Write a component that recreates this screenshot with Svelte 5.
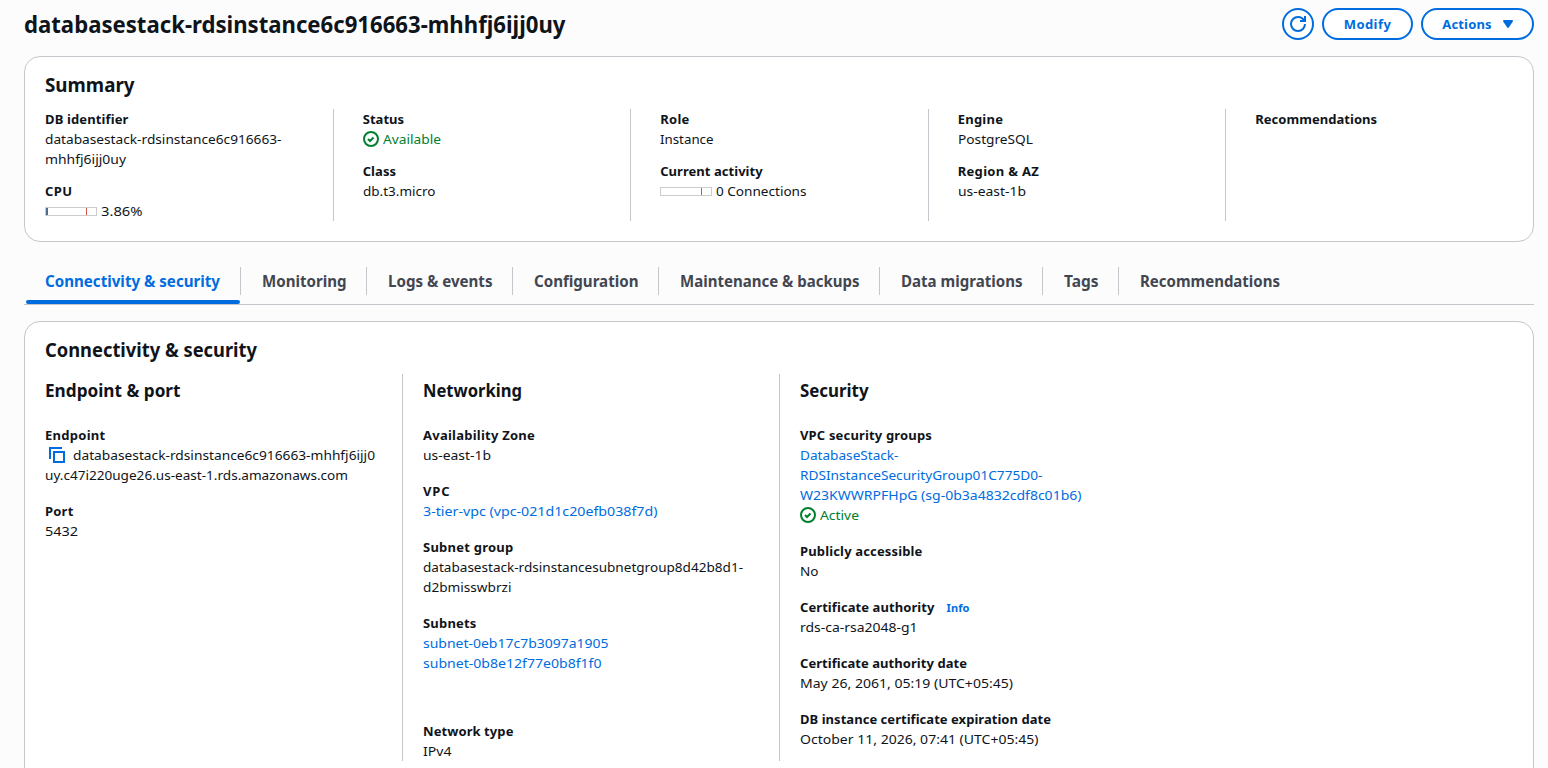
<script>
  const summary = [
    [
      { label: ['DB identifier', 83.5], lines: [['databasestack-rdsinstance6c916663-', 236.5], ['mhhfj6ijj0uy', 81]] },
      { label: ['CPU', 27.5], meter: 2, lines: [['3.86%', 41.5]] }
    ],
    [
      { label: ['Status', 41.5], ok: true, lines: [['Available', 58]] },
      { label: ['Class', 33.5], lines: [['db.t3.micro', 72.5]] }
    ],
    [
      { label: ['Role', 29.5], lines: [['Instance', 53.5]] },
      { label: ['Current activity', 102.5], meter: 0, lines: [['0 Connections', 90.5]] }
    ],
    [
      { label: ['Engine', 45.5], lines: [['PostgreSQL', 75]] },
      { label: ['Region & AZ', 81.5], lines: [['us-east-1b', 68]] }
    ],
    [{ label: ['Recommendations', 122], lines: [] }]
  ];

  const tabs = [
    ['Connectivity & security', 175],
    ['Monitoring', 84.5],
    ['Logs & events', 104.5],
    ['Configuration', 104.5],
    ['Maintenance & backups', 179.5],
    ['Data migrations', 121.5],
    ['Tags', 34.5],
    ['Recommendations', 140]
  ];

  const details = [
    {
      title: ['Endpoint & port', 135.5],
      items: [
        { label: ['Endpoint', 60.5], copy: true, lines: [['databasestack-rdsinstance6c916663-mhhfj6ijj0', 302], ['uy.c47i220uge26.us-east-1.rds.amazonaws.com', 303]] },
        { label: ['Port', 28.5], lines: [['5432', 33]] }
      ]
    },
    {
      title: ['Networking', 99],
      items: [
        { label: ['Availability Zone', 112], lines: [['us-east-1b', 68]] },
        { label: ['VPC', 27.5], link: true, lines: [['3-tier-vpc (vpc-021d1c20efb038f7d)', 234.5]] },
        { label: ['Subnet group', 90.5], lines: [['databasestack-rdsinstancesubnetgroup8d42b8d1-', 320], ['d2bmisswbrzi', 88.5]] },
        { label: ['Subnets', 53.5], link: true, tall: true, lines: [['subnet-0eb17c7b3097a1905', 185.5], ['subnet-0b8e12f77e0b8f1f0', 178.5]] },
        { label: ['Network type', 90.5], lines: [['IPv4', 28.5]] }
      ]
    },
    {
      title: ['Security', 68.5],
      items: [
        { label: ['VPC security groups', 132], link: true, lines: [['DatabaseStack-', 98.5], ['RDSInstanceSecurityGroup01C775D0-', 242.5], ['W23KWWRPFHpG (sg-0b3a4832cdf8c01b6)', 281.5]], status: ['Active', 39] },
        { label: ['Publicly accessible', 122.5], lines: [['No', 18.5]] },
        { label: ['Certificate authority', 134.5], info: true, lines: [['rds-ca-rsa2048-g1', 117.5]] },
        { label: ['Certificate authority date', 167], lines: [['May 26, 2061, 05:19 (UTC+05:45)', 213]] },
        { label: ['DB instance certificate expiration date', 251], lines: [['October 11, 2026, 07:41 (UTC+05:45)', 238.5]] }
      ]
    }
  ];

  // Tracks a run of text so that it measures the given width.
  function track(node, width) {
    const natural = node.getBoundingClientRect().width;
    node.style.letterSpacing = (width - natural) / node.textContent.length + 'px';
  }

  // Scales the letterforms horizontally so that the run measures the given width.
  function stretch(node, width) {
    node.style.transform = `scaleX(${width / node.getBoundingClientRect().width})`;
  }
</script>

{#snippet text([value, width])}<span class="run" use:track={width}>{value}</span>{/snippet}
{#snippet scaled([value, width])}<span class="run" use:stretch={width}>{value}</span>{/snippet}

{#snippet check()}
  <svg class="icon" viewBox="0 0 16 16"><circle cx="8" cy="8" r="7" /><path d="m5 8 2 2 3.521-3.521" /></svg>
{/snippet}

{#snippet field(item)}
  <div class="field" class:tall={item.tall}>
    <div class="label">
      {@render text(item.label)}
      {#if item.info}<a class="info">{@render text(['Info', 23])}</a>{/if}
    </div>
    {#each item.lines as line, i}
      <div class="line" class:link={item.link} class:ok={item.ok}>
        {#if item.ok}{@render check()}{/if}
        {#if item.copy && i === 0}
          <svg class="icon copy" viewBox="0 0 16 16"><path d="M15 5H5v10h10V5z" /><path d="M13 1H1v11" /></svg>
        {/if}
        {#if item.meter !== undefined}
          <span class="meter"><i style="width:{item.meter}px"></i></span>
        {/if}
        {@render scaled(line)}
      </div>
    {/each}
    {#if item.status}
      <div class="line ok">{@render check()}{@render scaled(item.status)}</div>
    {/if}
  </div>
{/snippet}

<main>
  <header>
    <h1>{@render scaled(['databasestack-rdsinstance6c916663-mhhfj6ijj0uy', 541.5])}</h1>
    <div class="actions">
      <button class="round" aria-label="Refresh">
        <svg class="icon" viewBox="0 0 16 16"><path d="M10 5h5V0" /><path d="M15 8c0 3.87-3.13 7-7 7s-7-3.13-7-7 3.13-7 7-7c2.79 0 5.2 1.63 6.33 4" /></svg>
      </button>
      <button class="modify">{@render text(['Modify', 47.5])}</button>
      <button class="menu">
        {@render text(['Actions', 49.5])}
        <svg class="icon caret" viewBox="0 0 16 16"><path d="M4 5h8l-4 6-4-6z" /></svg>
      </button>
    </div>
  </header>

  <section class="card">
    <h2>{@render scaled(['Summary', 89.5])}</h2>
    <div class="summary">
      {#each summary as column}
        <div class="column">
          {#each column as item}{@render field(item)}{/each}
        </div>
      {/each}
    </div>
  </section>

  <nav>
    {#each tabs as tab, i}
      <a class="tab" class:active={i === 0}><div class="name">{@render scaled(tab)}</div></a>
    {/each}
  </nav>

  <section class="card main">
    <h2>{@render scaled(['Connectivity & security', 212])}</h2>
    <div class="details">
      {#each details as group}
        <div class="column">
          <h3>{@render scaled(group.title)}</h3>
          {#each group.items as item}{@render field(item)}{/each}
        </div>
      {/each}
    </div>
  </section>
</main>

<style>
  :global(body) { background: #fcfcfd; }
  main {
    box-sizing: border-box;
    height: 768px;
    overflow: hidden;
    padding: 8px 14px 0 24px;
    color: #0f141a;
    font: 13px/20px 'Noto Sans', 'Open Sans', sans-serif;
    white-space: nowrap;
  }
  .run { display: inline-block; transform-origin: 0 50%; }
  header { display: flex; justify-content: space-between; height: 32px; margin-bottom: 16px; }
  h1, h2, h3 { margin: 0; font-family: 'Noto Sans', sans-serif; font-weight: 700; }
  h1 { font-size: 24px; line-height: 32px; }
  h2 { font-size: 20px; line-height: 24px; }
  h3 { padding: 5px 0 8px; font-size: 18px; line-height: 22px; }
  .actions { display: flex; gap: 8px; }
  button {
    box-sizing: border-box;
    display: flex;
    align-items: center;
    justify-content: center;
    height: 32px;
    padding: 0;
    border: 2px solid #006ce0;
    border-radius: 16px;
    background: #fff;
    color: #006ce0;
    font: 700 13px/20px 'Noto Sans', sans-serif;
  }
  .round { width: 32px; }
  .modify { width: 91px; }
  .menu { width: 113px; gap: 8px; padding-left: 3px; }
  .icon {
    flex: none;
    width: 16px;
    height: 16px;
    fill: none;
    stroke: currentColor;
    stroke-width: 2;
    overflow: visible;
  }
  .caret path { fill: currentColor; stroke-linejoin: round; }
  .copy { margin: 0 8px 0 4px; color: #006ce0; }
  .card {
    box-sizing: border-box;
    height: 186px;
    padding: 16px 20px 0;
    border: 1px solid #c6c6cd;
    border-radius: 16px;
    background: #fff;
  }
  .summary { display: grid; grid-template-columns: 287.7px repeat(3, 297.5px) 1fr; height: 112px; margin-top: 12px; }
  .column { display: flex; flex-direction: column; gap: 12px; }
  .column + .column { padding-left: 29px; border-left: 1px solid #c6c6cd; }
  .label { display: flex; align-items: center; font-weight: 700; }
  .info { margin: 1px 0 -1px 12px; color: #006ce0; font-size: 11px; }
  .line { display: flex; align-items: center; height: 20px; }
  .link { color: #006ce0; }
  .ok { gap: 4px; color: #00802f; }
  .meter {
    box-sizing: border-box;
    display: flex;
    justify-content: space-between;
    width: 52px;
    height: 9px;
    margin-right: 3.5px;
    padding-right: 9px;
    border: 1px solid #ccc;
  }
  .meter i { background: #486f92; }
  .meter::after { content: ''; width: 1px; background: #d9534f; }
  nav {
    display: grid;
    grid-template-columns: 216px 126px 146px 146px 221px 163px 76px 1fr;
    height: 37px;
    margin-top: 25px;
    padding-left: 1px;
    border-bottom: 1px solid #c6c6cd;
    color: #424650;
    font: 700 16px/28px 'Noto Sans', sans-serif;
  }
  .name { height: 28px; padding-left: 20.5px; border-right: 1px solid #c6c6cd; }
  .active .name { padding-left: 20px; }
  .tab:last-child .name { border-right: 0; }
  .active { color: #006ce0; }
  .active::after {
    content: '';
    display: block;
    height: 4px;
    margin: 5px 1px 0;
    border-radius: 2px;
    background: #006ce0;
  }
  .main { height: 520px; margin-top: 16px; }
  .details { display: grid; grid-template-columns: 357px 377px 377px 356px; height: 387px; margin-top: 12px; }
  .details .column { gap: 16px; }
  .details .column + .column { padding-left: 20px; }
  .tall { min-height: 92px; }
</style>
